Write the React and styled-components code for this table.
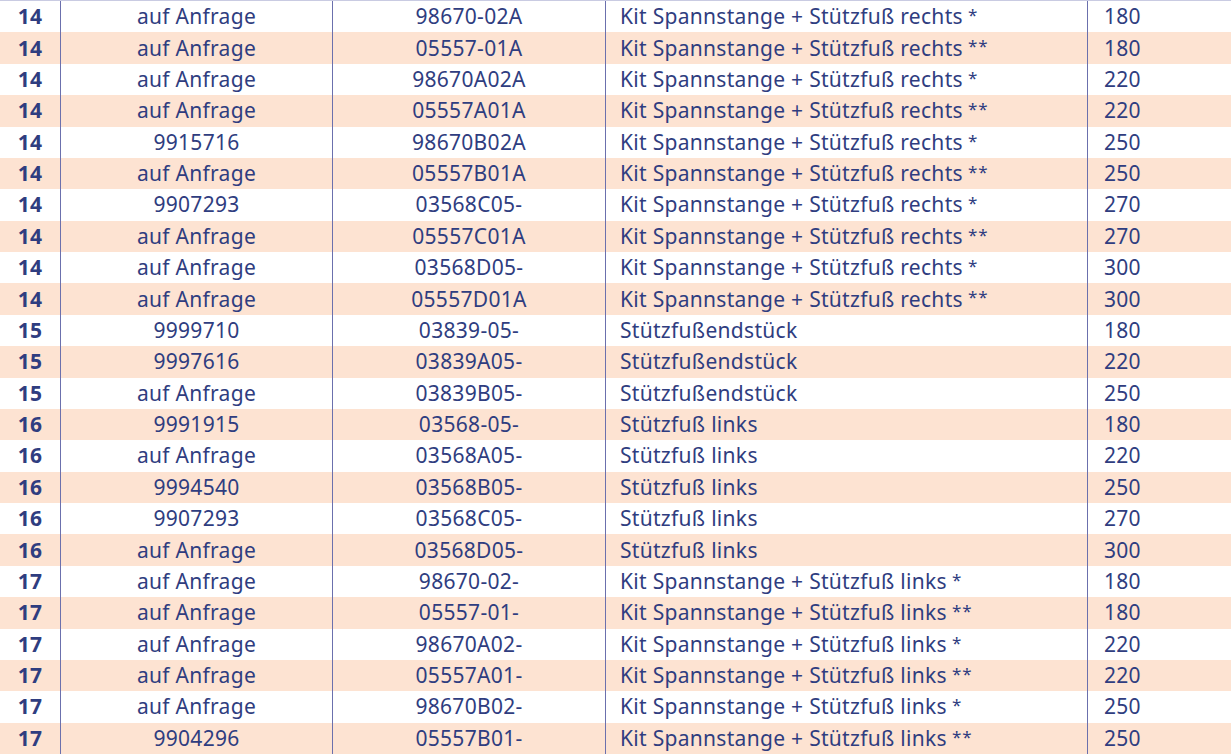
import React from "react";
import styled, { createGlobalStyle } from "styled-components";

const Global = createGlobalStyle`
  html, body { margin: 0; padding: 0; background: #ffffff; }
  body { font-family: "Noto Sans", "Open Sans", sans-serif; }
`;

const rows = [
  ["14", "auf Anfrage", "98670-02A", "Kit Spannstange + Stützfuß rechts", "*", "180"],
  ["14", "auf Anfrage", "05557-01A", "Kit Spannstange + Stützfuß rechts", "**", "180"],
  ["14", "auf Anfrage", "98670A02A", "Kit Spannstange + Stützfuß rechts", "*", "220"],
  ["14", "auf Anfrage", "05557A01A", "Kit Spannstange + Stützfuß rechts", "**", "220"],
  ["14", "9915716", "98670B02A", "Kit Spannstange + Stützfuß rechts", "*", "250"],
  ["14", "auf Anfrage", "05557B01A", "Kit Spannstange + Stützfuß rechts", "**", "250"],
  ["14", "9907293", "03568C05-", "Kit Spannstange + Stützfuß rechts", "*", "270"],
  ["14", "auf Anfrage", "05557C01A", "Kit Spannstange + Stützfuß rechts", "**", "270"],
  ["14", "auf Anfrage", "03568D05-", "Kit Spannstange + Stützfuß rechts", "*", "300"],
  ["14", "auf Anfrage", "05557D01A", "Kit Spannstange + Stützfuß rechts", "**", "300"],
  ["15", "9999710", "03839-05-", "Stützfußendstück", "", "180"],
  ["15", "9997616", "03839A05-", "Stützfußendstück", "", "220"],
  ["15", "auf Anfrage", "03839B05-", "Stützfußendstück", "", "250"],
  ["16", "9991915", "03568-05-", "Stützfuß links", "", "180"],
  ["16", "auf Anfrage", "03568A05-", "Stützfuß links", "", "220"],
  ["16", "9994540", "03568B05-", "Stützfuß links", "", "250"],
  ["16", "9907293", "03568C05-", "Stützfuß links", "", "270"],
  ["16", "auf Anfrage", "03568D05-", "Stützfuß links", "", "300"],
  ["17", "auf Anfrage", "98670-02-", "Kit Spannstange + Stützfuß links", "*", "180"],
  ["17", "auf Anfrage", "05557-01-", "Kit Spannstange + Stützfuß links", "**", "180"],
  ["17", "auf Anfrage", "98670A02-", "Kit Spannstange + Stützfuß links", "*", "220"],
  ["17", "auf Anfrage", "05557A01-", "Kit Spannstange + Stützfuß links", "**", "220"],
  ["17", "auf Anfrage", "98670B02-", "Kit Spannstange + Stützfuß links", "*", "250"],
  ["17", "9904296", "05557B01-", "Kit Spannstange + Stützfuß links", "**", "250"],
];

const Table = styled.div`
  width: 1231px;
  border-top: 1px solid #c9cbe2;
  display: flex;
  flex-direction: column;
`;

const Row = styled.div`
  display: grid;
  grid-template-columns: 60px 272px 273px 482px 144px;
  height: 31.375px;
  background: ${(p) => (p.$shaded ? "#fde3d2" : "#ffffff")};
  color: #2f3d80;
  font-size: 21px;
  letter-spacing: 0.3px;
`;

const Cell = styled.div`
  display: flex;
  align-items: center;
  justify-content: ${(p) => (p.$align === "left" ? "flex-start" : "center")};
  padding-left: ${(p) => p.$pad || 0}px;
  border-left: ${(p) => (p.$line ? "1px solid #6b70ad" : "none")};
  font-weight: ${(p) => (p.$bold ? 700 : 400)};
  white-space: nowrap;
  line-height: 1;
`;

const Stars = styled.span`
  margin-left: 5px;
  letter-spacing: 1px;
  font-size: 17px;
  align-self: flex-start;
  padding-top: 5px;
`;

export default function App() {
  return (
    <>
      <Global />
      <Table>
        {rows.map((r, i) => (
          <Row key={i} $shaded={i % 2 === 1}>
            <Cell $bold>{r[0]}</Cell>
            <Cell $line>{r[1]}</Cell>
            <Cell $line>{r[2]}</Cell>
            <Cell $line $align="left" $pad={14}>
              {r[3]}
              {r[4] && <Stars>{r[4]}</Stars>}
            </Cell>
            <Cell $line $align="left" $pad={16}>{r[5]}</Cell>
          </Row>
        ))}
      </Table>
    </>
  );
}
